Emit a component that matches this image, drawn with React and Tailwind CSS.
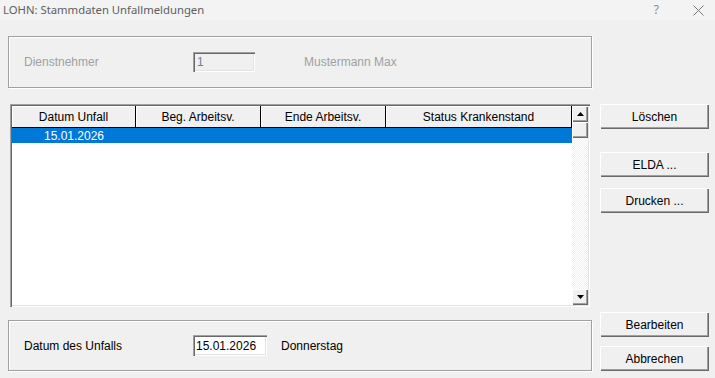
const raised =
  "bg-[#f0f0f0] shadow-[inset_1px_1px_0_#ffffff,inset_-1px_-1px_0_#696969,inset_-2px_-2px_0_#a0a0a0]";
const sunken =
  "shadow-[inset_1px_1px_0_#a0a0a0,inset_2px_2px_0_#696969,inset_-1px_-1px_0_#ffffff,inset_-2px_-2px_0_#e3e3e3]";
const etched = "border border-[#a0a0a0] shadow-[inset_1px_1px_0_#ffffff,1px_1px_0_#ffffff]";

function Arrow({ down }) {
  return (
    <svg width="7" height="4" viewBox="0 0 7 4">
      <polygon points={down ? "0,0 7,0 3.5,4" : "3.5,0 7,4 0,4"} fill="#000" />
    </svg>
  );
}

function DlgButton({ label, className = "" }) {
  return (
    <button
      type="button"
      className={`w-[109px] h-[25px] flex items-center justify-center text-black ${raised} ${className}`}
    >
      {label}
    </button>
  );
}

function HeaderCell({ label, width }) {
  return (
    <div
      className={`${width} h-full flex items-center justify-center border-r border-black shadow-[inset_1px_1px_0_#ffffff] text-black`}
    >
      {label}
    </div>
  );
}

export default function App() {
  return (
    <div className="w-[715px] h-[378px] bg-[#f0f0f0] flex flex-col font-['Liberation_Sans',Arial,sans-serif] text-[12px] overflow-hidden">
      {/* title bar */}
      <div className="h-[20px] bg-[#f3f3f3] flex items-center pl-[3px]">
        <span className="font-['Noto_Sans',sans-serif] text-[11.3px] text-[#606060] leading-none">
          LOHN: Stammdaten Unfallmeldungen
        </span>
        <span className="ml-auto font-['Noto_Sans',sans-serif] text-[12px] text-[#8a8a8a] leading-none">?</span>
        <svg className="ml-[34px] mr-[11px]" width="11" height="11" viewBox="0 0 11 11">
          <path d="M0.5 0.5L10.5 10.5M10.5 0.5L0.5 10.5" stroke="#7a7a7a" strokeWidth="1" />
        </svg>
      </div>

      <div className="flex">
        <div className="w-[592px] pl-[8px] flex flex-col">
          {/* Dienstnehmer group */}
          <div className={`mt-[16px] w-[584px] h-[52px] flex items-center pl-[15px] ${etched}`}>
            <span className="w-[169px] text-[#a0a0a0]">Dienstnehmer</span>
            <div className={`w-[62px] h-[20px] flex items-center pl-[4px] text-[#6d7f99] ${sunken}`}>1</div>
            <span className="ml-[49px] text-[#a0a0a0]">Mustermann Max</span>
          </div>

          {/* list */}
          <div className={`mt-[16px] ml-[2px] w-[580px] h-[203px] bg-white p-[2px] flex ${sunken}`}>
            <div className="w-[560px] flex flex-col">
              <div className="h-[22px] flex bg-[#f0f0f0] border-b border-black">
                <HeaderCell label="Datum Unfall" width="w-[124px]" />
                <HeaderCell label="Beg. Arbeitsv." width="w-[125px]" />
                <HeaderCell label="Ende Arbeitsv." width="w-[125px]" />
                <HeaderCell label="Status Krankenstand" width="w-[186px]" />
              </div>
              <div className="h-[15px] bg-[#0078d7] flex text-white">
                <div className="w-[124px] flex items-center justify-center">15.01.2026</div>
              </div>
            </div>
            <div className="w-[16px] flex flex-col">
              <div className={`h-[16px] flex items-center justify-center ${raised}`}>
                <Arrow />
              </div>
              <div className={`h-[16px] ${raised}`} />
              <div className="flex-1 bg-[repeating-conic-gradient(#f0f0f0_0_25%,#ffffff_0_50%)] bg-[length:2px_2px]" />
              <div className={`h-[16px] flex items-center justify-center ${raised}`}>
                <Arrow down />
              </div>
            </div>
          </div>

          {/* Datum group */}
          <div className={`mt-[13px] w-[584px] h-[51px] flex items-center pl-[15px] ${etched}`}>
            <span className="w-[169px] text-black">Datum des Unfalls</span>
            <div className={`w-[74px] h-[21px] bg-white flex items-center pl-[3px] text-black ${sunken}`}>
              15.01.2026
            </div>
            <span className="ml-[14px] text-black">Donnerstag</span>
          </div>
        </div>

        {/* buttons */}
        <div className="ml-[8px] flex flex-col">
          <DlgButton label="Löschen" className="mt-[84px]" />
          <DlgButton label="ELDA ..." className="mt-[23px]" />
          <DlgButton label="Drucken ..." className="mt-[11px]" />
          <DlgButton label="Bearbeiten" className="mt-[99px]" />
          <DlgButton label="Abbrechen" className="mt-[9px]" />
        </div>
      </div>
    </div>
  );
}
